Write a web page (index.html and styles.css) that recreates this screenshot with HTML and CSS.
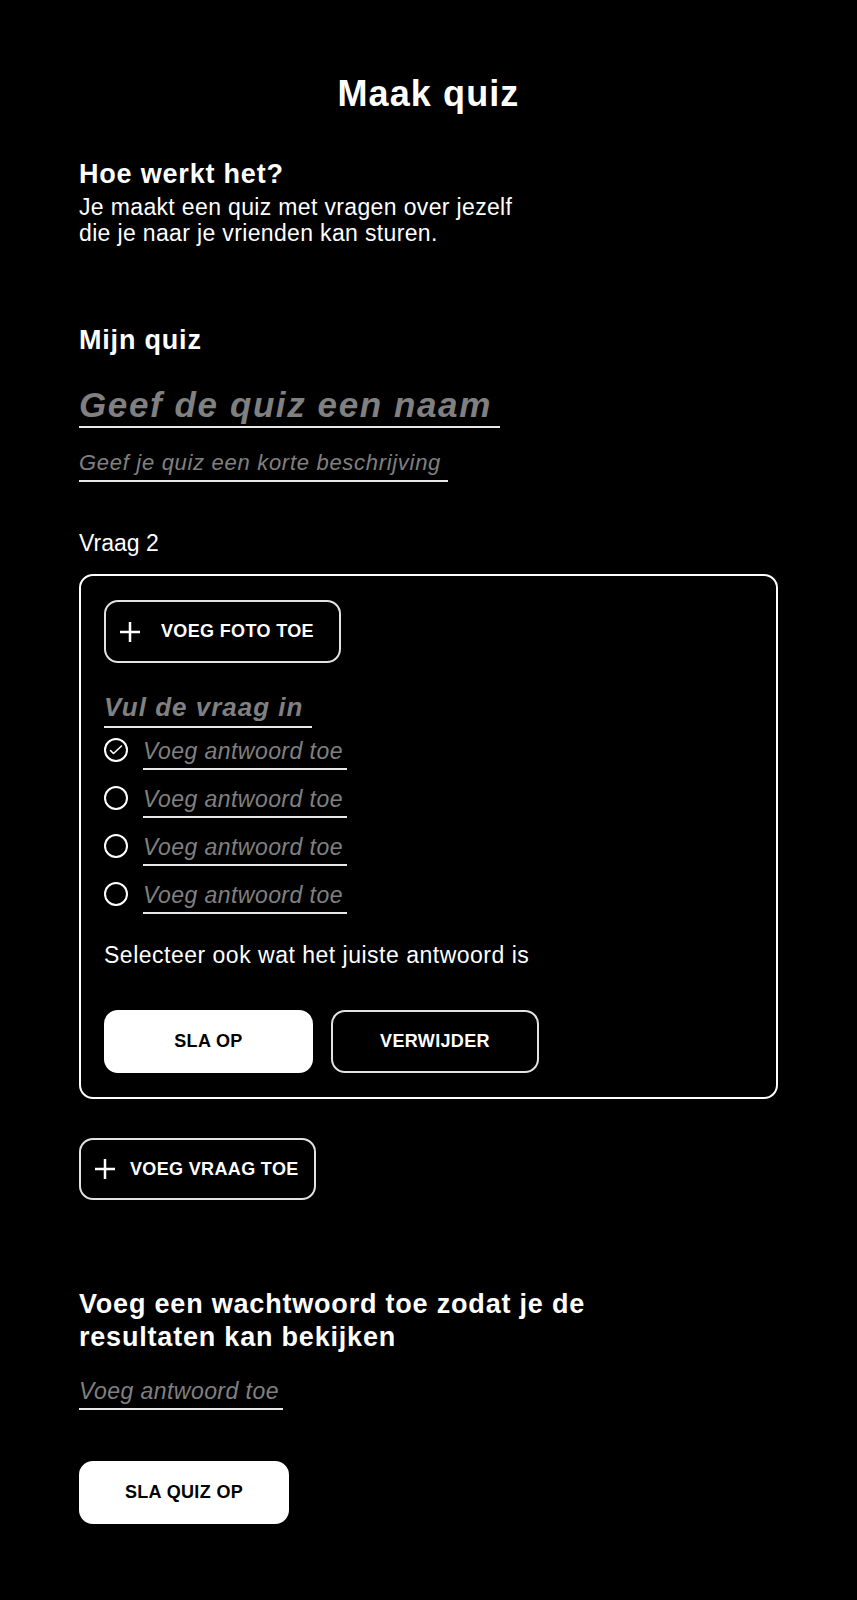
FILE: index.html
```html
<!DOCTYPE html>
<html lang="nl">
<head>
<meta charset="utf-8">
<title>Maak quiz</title>
<link rel="stylesheet" href="styles.css">
</head>
<body>
<main class="page">
  <h1 class="title">Maak quiz</h1>

  <section class="intro">
    <h2 class="h2">Hoe werkt het?</h2>
    <p class="lead">Je maakt een quiz met vragen over jezelf<br>die je naar je vrienden kan sturen.</p>
  </section>

  <section class="quiz-meta">
    <h2 class="h2">Mijn quiz</h2>
    <span class="field field-name">Geef de quiz een naam</span>
    <span class="field field-desc">Geef je quiz een korte beschrijving</span>
  </section>

  <section class="question">
    <div class="q-label">Vraag 2</div>
    <div class="q-card">
      <button class="btn btn-add btn-foto" type="button">
        <svg class="plus" width="20" height="20" viewBox="0 0 20 20"><path d="M10 0V20M0 10H20" stroke="#fff" stroke-width="2.5" fill="none"/></svg>
        <span>VOEG FOTO TOE</span>
      </button>
      <span class="field field-question">Vul de vraag in</span>
      <div class="answers">
        <div class="answer">
          <svg class="radio" width="24" height="24" viewBox="0 0 24 24"><circle cx="12" cy="12" r="11" stroke="#fff" stroke-width="2" fill="none"/><path d="M6.5 12.5L9.5 15.5L17.5 8" stroke="#fff" stroke-width="1.6" fill="none" stroke-linecap="round" stroke-linejoin="round"/></svg>
          <span class="field field-answer">Voeg antwoord toe</span>
        </div>
        <div class="answer">
          <svg class="radio" width="24" height="24" viewBox="0 0 24 24"><circle cx="12" cy="12" r="11" stroke="#fff" stroke-width="2" fill="none"/></svg>
          <span class="field field-answer">Voeg antwoord toe</span>
        </div>
        <div class="answer">
          <svg class="radio" width="24" height="24" viewBox="0 0 24 24"><circle cx="12" cy="12" r="11" stroke="#fff" stroke-width="2" fill="none"/></svg>
          <span class="field field-answer">Voeg antwoord toe</span>
        </div>
        <div class="answer">
          <svg class="radio" width="24" height="24" viewBox="0 0 24 24"><circle cx="12" cy="12" r="11" stroke="#fff" stroke-width="2" fill="none"/></svg>
          <span class="field field-answer">Voeg antwoord toe</span>
        </div>
      </div>
      <p class="hint">Selecteer ook wat het juiste antwoord is</p>
      <div class="actions">
        <button class="btn btn-solid btn-save" type="button">SLA OP</button>
        <button class="btn btn-outline btn-delete" type="button">VERWIJDER</button>
      </div>
    </div>
    <button class="btn btn-add btn-vraag" type="button">
      <svg class="plus" width="20" height="20" viewBox="0 0 20 20"><path d="M10 0V20M0 10H20" stroke="#fff" stroke-width="2.5" fill="none"/></svg>
      <span>VOEG VRAAG TOE</span>
    </button>
  </section>

  <section class="password">
    <h2 class="h2 h2-pass">Voeg een wachtwoord toe zodat je de resultaten kan bekijken</h2>
    <span class="field field-answer field-pass">Voeg antwoord toe</span>
    <button class="btn btn-solid btn-savequiz" type="button">SLA QUIZ OP</button>
  </section>
</main>
</body>
</html>
```
FILE: styles.css
```css
* { box-sizing: border-box; }

html, body {
  margin: 0;
  background: #000;
}

body {
  color: #fff;
  font-family: "Liberation Sans", Arial, Helvetica, sans-serif;
}

.page {
  width: 857px;
  padding: 72px 79px 76px;
}

.title {
  margin: 0;
  font-size: 36px;
  line-height: 44px;
  font-weight: 700;
  letter-spacing: 1.1px;
  text-align: center;
}

.intro {
  margin-top: 42px;
}

.h2 {
  margin: 0;
  font-size: 27px;
  line-height: 32px;
  font-weight: 700;
  letter-spacing: 0.8px;
}

.lead {
  margin: 4px 0 0;
  font-size: 23px;
  line-height: 26px;
  letter-spacing: 0.35px;
}

.quiz-meta {
  margin-top: 78px;
  display: flex;
  flex-direction: column;
  align-items: flex-start;
}

.field {
  display: inline-block;
  color: #808080;
  font-style: italic;
  border-bottom: 2px solid #e8e8e8;
}

.field-name {
  margin-top: 28px;
  font-size: 35px;
  line-height: 42px;
  font-weight: 700;
  letter-spacing: 1.6px;
  padding-right: 8px;
}

.field-desc {
  margin-top: 22px;
  font-size: 22px;
  line-height: 26px;
  letter-spacing: 0.7px;
  padding-bottom: 4px;
  padding-right: 7px;
}

.question {
  display: flex;
  flex-direction: column;
  align-items: flex-start;
}

.q-label {
  margin-top: 48px;
  font-size: 23px;
  line-height: 26px;
  letter-spacing: 0;
}

.q-card {
  margin-top: 18px;
  width: 699px;
  border: 2px solid #fff;
  border-radius: 14px;
  padding: 24px 23px 24px;
  display: flex;
  flex-direction: column;
  align-items: flex-start;
}

.btn {
  display: flex;
  align-items: center;
  height: 63px;
  margin: 0;
  border: 2px solid #e2e2e2;
  border-radius: 14px;
  background: #000;
  color: #fff;
  font-family: "Liberation Sans", Arial, Helvetica, sans-serif;
  font-size: 18px;
  font-weight: 700;
  letter-spacing: 0.35px;
  cursor: pointer;
}

.btn-add {
  width: 237px;
  padding: 0 0 0 14px;
}

.plus {
  flex: none;
  display: block;
}

.btn-foto {
  gap: 21px;
}

.btn-vraag {
  gap: 15px;
  height: 62px;
  margin-top: 39px;
}

.field-question {
  margin-top: 28px;
  font-size: 26px;
  line-height: 32px;
  font-weight: 700;
  letter-spacing: 1px;
  padding-bottom: 3px;
  padding-right: 9px;
}

.answers {
  margin-top: 10px;
  display: flex;
  flex-direction: column;
  gap: 16px;
}

.answer {
  display: flex;
  align-items: flex-start;
  gap: 15px;
}

.radio {
  flex: none;
  display: block;
}

.field-answer {
  font-size: 23px;
  line-height: 26px;
  letter-spacing: 0.45px;
  padding-bottom: 4px;
  padding-right: 4px;
}

.hint {
  margin: 28px 0 0;
  font-size: 23px;
  line-height: 26px;
  letter-spacing: 0.5px;
}

.actions {
  margin-top: 42px;
  display: flex;
  gap: 18px;
}

.btn-solid {
  justify-content: center;
  background: #fff;
  color: #000;
  border-color: #fff;
}

.btn-outline {
  justify-content: center;
}

.btn-save {
  width: 209px;
}

.btn-delete {
  width: 208px;
}

.password {
  margin-top: 88px;
  display: flex;
  flex-direction: column;
  align-items: flex-start;
}

.h2-pass {
  line-height: 33px;
  max-width: 560px;
}

.field-pass {
  margin-top: 24px;
}

.btn-savequiz {
  margin-top: 51px;
  width: 210px;
}
```
